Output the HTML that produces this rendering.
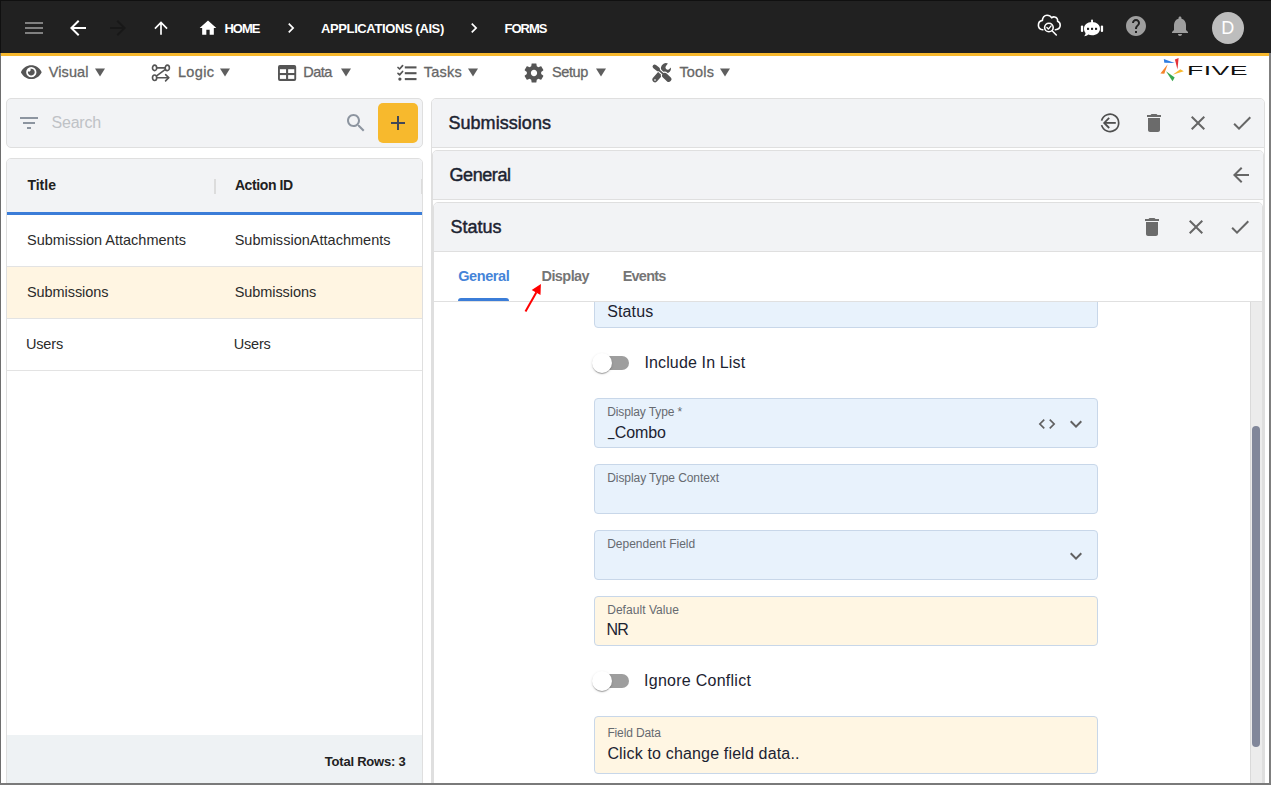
<!DOCTYPE html>
<html lang="en"><head><meta charset="utf-8"><title>Five - Forms</title>
<style>
html,body{margin:0;padding:0;background:#fff;}
body{width:1271px;height:785px;overflow:hidden;font-family:"Liberation Sans",sans-serif;}
#app{position:relative;width:1271px;height:785px;overflow:hidden;background:#fff;}
.a{position:absolute;box-sizing:border-box;}
.t{position:absolute;white-space:nowrap;line-height:1;font-family:"Liberation Sans",sans-serif;}
svg{position:absolute;display:block;overflow:visible;}
.card{position:absolute;box-sizing:border-box;border:1px solid #dfdfdf;border-radius:5px;background:#f2f3f5;}
.fld{position:absolute;box-sizing:border-box;left:594px;width:504px;height:50px;border:1px solid #c8d7e9;border-radius:4px;background:#e8f2fc;}
.fld.c{background:#fff6e3;}

</style></head>
<body>
<div id="app">
<!-- top bar -->
<div class="a" style="left:0;top:0;width:1271px;height:53px;background:#212121;"></div>
<div class="a" style="left:0;top:53px;width:1271px;height:3px;background:#f7b82d;"></div>
<svg style="left:22px;top:16px" width="24" height="24" viewBox="0 0 24 24"><path fill="#808080" d="M3 18h18v-2H3v2zm0-5h18v-2H3v2zm0-7v2h18V6H3z"/></svg>
<svg style="left:66px;top:16px" width="24" height="24" viewBox="0 0 24 24"><path fill="#fff" d="M20 11H7.83l5.59-5.59L12 4l-8 8 8 8 1.41-1.41L7.83 13H20v-2z"/></svg>
<svg style="left:106px;top:16px" width="24" height="24" viewBox="0 0 24 24"><path fill="#181818" d="M12 4l-1.41 1.41L16.17 11H4v2h12.170l-5.58 5.59L12 20l8-8z"/></svg>
<svg style="left:151px;top:18px" width="20" height="20" viewBox="0 0 24 24"><path fill="#fff" d="M4 12l1.41 1.41L11 7.830V20h2V7.830l5.58 5.59L20 12l-8-8-8 8z"/></svg>
<svg style="left:198px;top:18px" width="20" height="20" viewBox="0 0 24 24"><path fill="#fff" d="M10 20v-6h4v6h5v-8h3L12 3 2 12h3v8z"/></svg>
<svg style="left:281px;top:18px" width="20" height="20" viewBox="0 0 24 24"><path fill="#fff" d="M10 6L8.590 7.410 13.170 12l-4.580 4.590L10 18l6-6z"/></svg>
<svg style="left:464px;top:18px" width="20" height="20" viewBox="0 0 24 24"><path fill="#fff" d="M10 6L8.590 7.410 13.170 12l-4.580 4.590L10 18l6-6z"/></svg>
<!-- cloud search -->
<svg style="left:1036px;top:12px" width="26" height="26" viewBox="0 0 26 26" fill="none" stroke="#fff" stroke-width="1.6" stroke-linecap="round" stroke-linejoin="round">
<path d="M6.800 17.800 C3.800 17.400 2.400 15.400 2.400 13.200 C2.400 10.600 4.200 8.800 6.400 8.400 C6.400 5.600 8.400 3.200 11 3.200 C13.200 3.200 14.800 4.200 15.800 5.800 C16.600 5 17.600 4.800 18.600 5 C20.600 5.400 21.800 7 21.600 9.200 C23.400 9.800 24.200 11.400 24.200 13.200 C24.200 15.600 22.400 17.400 19.400 17.800"/>
<circle cx="12.900" cy="15.500" r="4.300"/>
<path d="M16.100 18.800 L20.300 23.000"/>
<path d="M10.900 15.600 L12.400 17.100 L15.100 13.900" stroke-width="1.4"/>
</svg>
<!-- robot chat -->
<svg style="left:1079px;top:17px" width="26" height="22" viewBox="0 0 26 22">
<g fill="#fff">
<rect x="12.100" y="2.400" width="1.900" height="4" rx="0.900"/>
<path d="M13 5 C18 5 21 8 21 11.700 C21 15.500 17.600 18.200 13 18.200 C11.600 18.200 10.300 18 9.200 17.500 C8.200 18.400 6.700 19.200 5.200 19.300 C6.000 18.400 6.500 17.300 6.600 16.000 C5.500 14.900 5 13.400 5 11.700 C5 8 8 5 13 5z"/>
<rect x="1.900" y="8.500" width="2.300" height="6.500" rx="1.100"/>
<rect x="21.800" y="8.500" width="2.300" height="6.500" rx="1.100"/>
</g>
<g fill="#212121"><rect x="8" y="10.800" width="2.100" height="2.100"/><rect x="12" y="10.800" width="2.100" height="2.100"/><rect x="16" y="10.800" width="2.100" height="2.100"/></g>
</svg>
<svg style="left:1124px;top:14px" width="24" height="24" viewBox="0 0 24 24"><path fill="#9e9e9e" d="M12 2C6.480 2 2 6.480 2 12s4.480 10 10 10 10-4.480 10-10S17.520 2 12 2zm1 17h-2v-2h2v2zm2.070-7.750l-.9.920C13.450 12.900 13 13.500 13 15h-2v-.5c0-1.100.450-2.100 1.170-2.830l1.240-1.260c.370-.360.590-.860.590-1.410 0-1.100-.9-2-2-2s-2 .9-2 2H8c0-2.210 1.790-4 4-4s4 1.790 4 4c0 .880-.360 1.680-.930 2.250z"/></svg>
<svg style="left:1168px;top:14px" width="24" height="24" viewBox="0 0 24 24"><path fill="#9e9e9e" d="M12 22c1.100 0 2-.9 2-2h-4c0 1.100.890 2 2 2zm6-6v-5c0-3.070-1.640-5.640-4.500-6.320V4c0-.830-.670-1.500-1.500-1.500s-1.500.670-1.500 1.500v.680C7.630 5.360 6 7.920 6 11v5l-2 2v1h16v-1l-2-2z"/></svg>
<div class="a" style="left:1212px;top:12px;width:32px;height:32px;border-radius:50%;background:#bdbdbd;"></div>
<div class="t" style="left:1221.300px;top:19.100px;font-size:18px;color:#fff;">D</div>

<!-- menu icons -->
<svg style="left:20.700px;top:63.300px" width="20.600" height="18.300" viewBox="0 0 576 512" preserveAspectRatio="none"><path fill="#555" d="M572.520 241.400C518.290 135.590 410.930 64 288 64S57.680 135.640 3.480 241.410a32.350 32.350 0 0 0 0 29.190C57.710 376.410 165.070 448 288 448s230.320-71.640 284.520-177.410a32.350 32.350 0 0 0 0-29.190zM288 400a144 144 0 1 1 144-144 143.930 143.930 0 0 1-144 144zm0-240a95.310 95.310 0 0 0-25.310 3.790 47.850 47.850 0 0 1-66.900 66.900A95.780 95.780 0 1 0 288 160z"/></svg>
<!-- menu dropdown triangles -->
<svg style="left:95.300px;top:67.800px" width="10" height="9.100" viewBox="0 0 10 8"><path fill="#5e5e5e" d="M0 0h10L5 8z"/></svg>
<svg style="left:220.400px;top:67.800px" width="10" height="9.100" viewBox="0 0 10 8"><path fill="#5e5e5e" d="M0 0h10L5 8z"/></svg>
<svg style="left:340.600px;top:67.800px" width="10" height="9.100" viewBox="0 0 10 8"><path fill="#5e5e5e" d="M0 0h10L5 8z"/></svg>
<svg style="left:468.200px;top:67.800px" width="10" height="9.100" viewBox="0 0 10 8"><path fill="#5e5e5e" d="M0 0h10L5 8z"/></svg>
<svg style="left:595.600px;top:67.800px" width="10" height="9.100" viewBox="0 0 10 8"><path fill="#5e5e5e" d="M0 0h10L5 8z"/></svg>
<svg style="left:720.400px;top:67.800px" width="10" height="9.100" viewBox="0 0 10 8"><path fill="#5e5e5e" d="M0 0h10L5 8z"/></svg>
<!-- logic icon -->
<svg style="left:151px;top:64px" width="20" height="18" viewBox="0 0 20 18" fill="none" stroke="#555" stroke-width="1.650" stroke-linecap="round" stroke-linejoin="round">
<ellipse cx="3.600" cy="3.900" rx="2.100" ry="2.750"/><ellipse cx="16.300" cy="3.900" rx="2.100" ry="2.750"/><ellipse cx="3.600" cy="13.700" rx="2.100" ry="2.750"/>
<path d="M5.700 3.900H14.200"/><path d="M14.400 5.400 L5.600 11.800"/><path d="M5.700 13.700H17.500"/><path d="M14.600 10.700 L17.700 13.700 L14.600 16.800"/>
</svg>
<!-- data/table icon -->
<svg style="left:277.900px;top:64.900px" width="18.200" height="16" viewBox="0 0 18.200 16"><rect x="0" y="0" width="18.200" height="16" rx="1.900" fill="#555"/><g fill="#fff"><rect x="1.900" y="4.200" width="6.150" height="3.800"/><rect x="10.150" y="4.200" width="6.150" height="3.800"/><rect x="1.900" y="10.100" width="6.150" height="3.800"/><rect x="10.150" y="10.100" width="6.150" height="3.800"/></g></svg>
<!-- tasks icon -->
<svg style="left:397px;top:64px" width="20" height="18" viewBox="0 0 20 18" fill="none" stroke="#555" stroke-linecap="butt">
<g stroke-width="2.100"><path d="M7.800 3.400H19.500"/><path d="M7.800 9.200H19.500"/><path d="M7.800 15.100H19.500"/></g>
<g stroke-width="1.700" stroke-linejoin="round" stroke-linecap="round"><path d="M1.000 3.500 L2.600 5.000 L5.600 1.600"/><path d="M1.000 9.400 L2.600 10.900 L5.600 7.500"/></g>
<circle cx="2.900" cy="15.100" r="1.650" fill="#555" stroke="none"/>
</svg>
<!-- gear icon -->
<svg style="left:522px;top:61px" width="24" height="24" viewBox="0 0 24 24"><path fill="#555" d="M19.140 12.940c.040-.3.060-.610.060-.940 0-.320-.020-.640-.070-.940l2.030-1.580c.180-.140.230-.410.120-.610l-1.920-3.320c-.120-.220-.370-.290-.590-.220l-2.390.960c-.5-.380-1.030-.7-1.620-.940l-.360-2.540c-.040-.240-.240-.410-.480-.410h-3.840c-.240 0-.430.170-.470.410l-.360 2.540c-.590.240-1.130.570-1.620.940l-2.390-.960c-.220-.080-.470 0-.590.220L2.740 8.870c-.120.210-.080.470.120.610l2.030 1.580c-.050.300-.090.630-.090.940s.020.640.070.940l-2.030 1.580c-.180.140-.230.410-.120.610l1.920 3.320c.120.220.370.290.590.220l2.390-.960c.5.380 1.030.7 1.620.940l.360 2.540c.050.240.240.410.480.410h3.840c.240 0 .440-.170.470-.410l.360-2.540c.590-.240 1.130-.560 1.620-.940l2.390.960c.220.080.470 0 .590-.220l1.920-3.320c.120-.220.070-.470-.120-.610l-2.010-1.580zM12 15.150c-1.740 0-3.150-1.410-3.150-3.150s1.410-3.150 3.150-3.150 3.150 1.410 3.150 3.150-1.410 3.150-3.150 3.150z"/></svg>
<!-- tools icon -->
<svg style="left:646px;top:58px" width="32" height="30" viewBox="0 0 32 30" fill="none" stroke="#555">
<path d="M13.900 16.000 L9.100 21.600" stroke-width="5.400" stroke-linecap="round"/>
<path d="M21.900 5.500 A5.100 5.100 0 1 0 25.000 9.500 L22.700 11.500 Q21.300 12.300 20.100 11.100 Q18.900 9.900 19.800 8.300 Z" fill="#555" stroke="none"/>
<path d="M10.800 10.200 L18 16.800" stroke="#fff" stroke-width="3.800" stroke-linecap="butt"/>
<path d="M18.800 17.500 L22.700 21.200" stroke="#fff" stroke-width="7.600" stroke-linecap="round"/>
<path d="M8.700 8.600 L11.900 11.100" stroke-width="4.200" stroke-linecap="round"/>
<path d="M12 11.300 L18 16.700" stroke-width="1.700"/>
<path d="M18.800 17.500 L22.700 21.200" stroke-width="5.400" stroke-linecap="round"/>
<circle cx="9" cy="22" r="1" fill="#c8c8c8" stroke="none"/>
</svg>
<!-- FIVE logo -->
<svg style="left:1158px;top:56px" width="30" height="28" viewBox="1158 56 30 28">
<path fill="#2f7de1" d="M1163.800 59 L1174.700 62.900 L1164.300 62.700z"/>
<path fill="#e53238" d="M1178.600 57.900 L1174.900 59.600 L1177.500 69.600z"/>
<path fill="#f8b92f" d="M1183.800 71.300 L1180.300 69.200 L1172.700 74.800z"/>
<path fill="#37a84f" d="M1166 71.300 L1174.700 77.400 L1172.500 81.300z"/>
<path fill="#f5832a" d="M1167.700 64.200 L1160.400 73.500 L1164.300 73.700z"/>
</svg>
<div class="t" style="left:1187.300px;top:63.600px;font-size:13px;color:#111;transform-origin:0 0;transform:scaleX(2.05);letter-spacing:0.200px;">FIVE</div>

<!-- LEFT PANEL -->
<div class="card" style="left:6px;top:98px;width:417px;height:50px;"></div>
<svg style="left:17px;top:111px" width="24" height="24" viewBox="0 0 24 24"><path fill="#8d95a0" d="M10 18h4v-2h-4v2zM3 6v2h18V6H3zm3 7h12v-2H6v2z"/></svg>
<svg style="left:344px;top:111px" width="24" height="24" viewBox="0 0 24 24"><path fill="#8d95a0" d="M15.500 14h-.790l-.280-.270C15.410 12.590 16 11.110 16 9.500 16 5.910 13.090 3 9.500 3S3 5.910 3 9.500 5.910 16 9.500 16c1.610 0 3.090-.590 4.230-1.570l.270.280v.790l5 4.990L20.490 19l-4.990-5zm-6 0C7.010 14 5 11.990 5 9.500S7.010 5 9.500 5 14 7.010 14 9.500 11.990 14 9.500 14z"/></svg>
<div class="a" style="left:378px;top:103px;width:40px;height:40px;border-radius:5px;background:#f7b92d;"></div>
<svg style="left:386px;top:111px" width="24" height="24" viewBox="0 0 24 24"><path fill="#414757" d="M19 13h-6v6h-2v-6H5v-2h6V5h2v6h6v2z"/></svg>

<div class="a" style="left:6px;top:158px;width:417px;height:630px;border:1px solid #dfdfdf;border-radius:5px 5px 0 0;background:#fff;overflow:hidden;">
  <div class="a" style="left:0;top:0;width:415px;height:53px;background:#f2f3f5;"></div>
  <div class="a" style="left:0;top:53px;width:415px;height:3px;background:#3b7dd8;"></div>
  <div class="a" style="left:207px;top:20px;width:2px;height:15px;background:#dcdcdc;"></div>
  <div class="a" style="left:414px;top:20px;width:2px;height:15px;background:#dcdcdc;"></div>
  <div class="a" style="left:0;top:107px;width:415px;height:1px;background:#e3e3e3;"></div>
  <div class="a" style="left:0;top:108px;width:415px;height:51px;background:#fff5e2;"></div>
  <div class="a" style="left:0;top:159px;width:415px;height:1px;background:#e3e3e3;"></div>
  <div class="a" style="left:0;top:211px;width:415px;height:1px;background:#e3e3e3;"></div>
  <div class="a" style="left:0;top:576px;width:415px;height:60px;background:#eef2f4;"></div>
</div>

<!-- RIGHT PANEL -->
<div class="card" style="left:431px;top:98px;width:834px;height:700px;background:#fff;overflow:hidden;">
  <div class="a" style="left:0;top:0;width:832px;height:49px;background:#f2f3f5;border-bottom:1px solid #dfdfdf;"></div>
</div>
<div class="card" style="left:432px;top:150px;width:832px;height:700px;background:#fff;overflow:hidden;">
  <div class="a" style="left:0;top:0;width:830px;height:49px;background:#f2f3f5;border-bottom:1px solid #dfdfdf;"></div>
</div>
<div class="card" style="left:433px;top:202px;width:830px;height:700px;background:#fff;overflow:hidden;">
  <div class="a" style="left:0;top:0;width:828px;height:49px;background:#f2f3f5;border-bottom:1px solid #dfdfdf;"></div>
  <div class="a" style="left:0;top:98px;width:828px;height:1px;background:#e0e0e0;"></div>
</div>
<!-- header icons -->
<svg style="left:1098px;top:111px" width="24" height="24" viewBox="0 0 24 24" fill="none" stroke="#4f4f4f" stroke-width="1.700">
<path d="M3.600 9.650 A8.700 8.700 0 1 1 3.600 14.150" stroke-linecap="butt"/>
<path d="M6.600 11.900H17.800" stroke-width="1.800"/><path d="M11.200 6.800 L6.200 11.900 L11.200 17.000" stroke-linejoin="miter" stroke-width="1.800"/>
</svg>
<svg style="left:1142px;top:111px" width="24" height="24" viewBox="0 0 24 24"><path fill="#6b6b6b" d="M6 19c0 1.100.9 2 2 2h8c1.100 0 2-.9 2-2V7H6v12zM19 4h-3.500l-1-1h-5l-1 1H5v2h14V4z"/></svg>
<svg style="left:1186px;top:111px" width="24" height="24" viewBox="0 0 24 24"><path fill="#666" d="M19 6.410L17.590 5 12 10.590 6.410 5 5 6.410 10.590 12 5 17.590 6.410 19 12 13.410 17.590 19 19 17.590 13.410 12z"/></svg>
<svg style="left:1230px;top:111px" width="24" height="24" viewBox="0 0 24 24"><path fill="#666" d="M9 16.170L4.830 12l-1.420 1.410L9 19 21 7l-1.410-1.410z"/></svg>
<svg style="left:1229px;top:163px" width="24" height="24" viewBox="0 0 24 24"><path fill="#666" d="M20 11H7.830l5.590-5.590L12 4l-8 8 8 8 1.410-1.410L7.830 13H20v-2z"/></svg>
<svg style="left:1140px;top:215px" width="24" height="24" viewBox="0 0 24 24"><path fill="#6b6b6b" d="M6 19c0 1.100.9 2 2 2h8c1.100 0 2-.9 2-2V7H6v12zM19 4h-3.500l-1-1h-5l-1 1H5v2h14V4z"/></svg>
<svg style="left:1184px;top:215px" width="24" height="24" viewBox="0 0 24 24"><path fill="#666" d="M19 6.410L17.590 5 12 10.590 6.410 5 5 6.410 10.590 12 5 17.590 6.410 19 12 13.410 17.590 19 19 17.590 13.410 12z"/></svg>
<svg style="left:1228px;top:215px" width="24" height="24" viewBox="0 0 24 24"><path fill="#666" d="M9 16.170L4.830 12l-1.420 1.410L9 19 21 7l-1.410-1.410z"/></svg>
<!-- tab underline -->
<div class="a" style="left:458px;top:298px;width:51px;height:3px;background:#3b7dd8;border-radius:3px 3px 0 0;"></div>

<!-- form scroll area -->
<div class="a" style="left:434px;top:302px;width:816px;height:481px;overflow:hidden;">
  <div class="fld" style="left:160px;top:-24px;"></div>
  <div class="fld" style="left:160px;top:96px;"></div>
  <div class="fld" style="left:160px;top:162px;"></div>
  <div class="fld" style="left:160px;top:228px;"></div>
  <div class="fld c" style="left:160px;top:294px;"></div>
  <div class="fld c" style="left:160px;top:414px;height:58px;"></div>
</div>
<!-- toggles -->
<div class="a" style="left:595px;top:356px;width:34px;height:14px;border-radius:7px;background:#9e9e9e;"></div>
<div class="a" style="left:592px;top:353px;width:20px;height:20px;border-radius:50%;background:#fff;box-shadow:0 2px 1px -1px rgba(0,0,0,.2),0 1px 1px 0 rgba(0,0,0,.14),0 1px 3px 0 rgba(0,0,0,.12);"></div>
<div class="a" style="left:595px;top:674px;width:34px;height:14px;border-radius:7px;background:#9e9e9e;"></div>
<div class="a" style="left:592px;top:671px;width:20px;height:20px;border-radius:50%;background:#fff;box-shadow:0 2px 1px -1px rgba(0,0,0,.2),0 1px 1px 0 rgba(0,0,0,.14),0 1px 3px 0 rgba(0,0,0,.12);"></div>
<!-- field icons -->
<svg style="left:1037px;top:414px" width="20" height="20" viewBox="0 0 24 24"><path fill="#616161" d="M9.400 16.600L4.800 12l4.600-4.600L8 6l-6 6 6 6 1.400-1.400zm5.200 0l4.600-4.600-4.600-4.600L16 6l6 6-6 6-1.400-1.400z"/></svg>
<svg style="left:1064px;top:412px" width="24" height="24" viewBox="0 0 24 24"><path fill="#616161" d="M16.590 8.590L12 13.170 7.410 8.590 6 10l6 6 6-6z"/></svg>
<svg style="left:1064px;top:544px" width="24" height="24" viewBox="0 0 24 24"><path fill="#616161" d="M16.590 8.590L12 13.170 7.410 8.590 6 10l6 6 6-6z"/></svg>
<!-- scrollbar -->
<div class="a" style="left:1250px;top:302px;width:12px;height:481px;background:#ececec;border-left:1px solid #dadada;"></div>
<div class="a" style="left:1252px;top:426px;width:8px;height:321px;border-radius:4px;background:#81879a;"></div>
<!-- red arrow -->
<svg style="left:520px;top:280px" width="30" height="36" viewBox="520 280 30 36"><path d="M525.500 311.400 L536.400 292.200" stroke="#ff0000" stroke-width="2" fill="none"/><path fill="#ff0000" d="M540.900 284 L540.500 294.900 L531.700 290.100z"/></svg>
<!-- window borders -->
<div class="a" style="left:0;top:0;width:1271px;height:1px;background:#101010;"></div>
<div class="a" style="left:0;top:1px;width:1px;height:52px;background:#101010;"></div>
<div class="a" style="left:0;top:53px;width:1px;height:732px;background:#6e6e6e;"></div>
<div class="a" style="left:1269px;top:53px;width:2px;height:732px;background:#7f7f7f;"></div>
<div class="a" style="left:0;top:783px;width:1271px;height:2px;background:#7a7a7a;"></div>

<div class="t" style="left:224.4px;top:22.2px;font-size:13px;font-weight:700;color:#fff;letter-spacing:-0.976px;">HOME</div>
<div class="t" style="left:321.0px;top:22.2px;font-size:13px;font-weight:700;color:#fff;letter-spacing:-0.384px;">APPLICATIONS (AIS)</div>
<div class="t" style="left:504.6px;top:22.2px;font-size:13px;font-weight:700;color:#fff;letter-spacing:-1.018px;">FORMS</div>
<div class="t" style="left:48.7px;top:64.5px;font-size:14.5px;font-weight:400;color:#666666;letter-spacing:0.118px;-webkit-text-stroke:0.3px #666666;">Visual</div>
<div class="t" style="left:177.9px;top:64.5px;font-size:14.5px;font-weight:400;color:#666666;letter-spacing:0.371px;-webkit-text-stroke:0.3px #666666;">Logic</div>
<div class="t" style="left:303.3px;top:64.5px;font-size:14.5px;font-weight:400;color:#666666;letter-spacing:-0.555px;-webkit-text-stroke:0.3px #666666;">Data</div>
<div class="t" style="left:423.8px;top:64.5px;font-size:14.5px;font-weight:400;color:#666666;letter-spacing:0.221px;-webkit-text-stroke:0.3px #666666;">Tasks</div>
<div class="t" style="left:551.9px;top:64.5px;font-size:14.5px;font-weight:400;color:#666666;letter-spacing:-0.357px;-webkit-text-stroke:0.3px #666666;">Setup</div>
<div class="t" style="left:679.4px;top:64.5px;font-size:14.5px;font-weight:400;color:#666666;letter-spacing:0.200px;-webkit-text-stroke:0.3px #666666;">Tools</div>
<div class="t" style="left:51.5px;top:114.6px;font-size:16px;font-weight:400;color:#bfc2c6;letter-spacing:-0.199px;">Search</div>
<div class="t" style="left:27.4px;top:177.8px;font-size:14px;font-weight:700;color:#212121;letter-spacing:0.015px;">Title</div>
<div class="t" style="left:234.9px;top:177.8px;font-size:14px;font-weight:700;color:#212121;letter-spacing:-0.391px;">Action ID</div>
<div class="t" style="left:27.0px;top:232.9px;font-size:14.5px;font-weight:400;color:#2b2b2b;letter-spacing:0.009px;">Submission Attachments</div>
<div class="t" style="left:234.7px;top:232.9px;font-size:14.5px;font-weight:400;color:#2b2b2b;letter-spacing:0.015px;">SubmissionAttachments</div>
<div class="t" style="left:27.0px;top:284.9px;font-size:14.5px;font-weight:400;color:#2b2b2b;letter-spacing:-0.075px;">Submissions</div>
<div class="t" style="left:234.7px;top:284.9px;font-size:14.5px;font-weight:400;color:#2b2b2b;letter-spacing:-0.075px;">Submissions</div>
<div class="t" style="left:26.0px;top:336.9px;font-size:14.5px;font-weight:400;color:#2b2b2b;letter-spacing:-0.179px;">Users</div>
<div class="t" style="left:233.7px;top:336.9px;font-size:14.5px;font-weight:400;color:#2b2b2b;letter-spacing:-0.179px;">Users</div>
<div class="t" style="left:324.8px;top:754.9px;font-size:13px;font-weight:700;color:#212121;letter-spacing:-0.218px;">Total Rows: 3</div>
<div class="t" style="left:448.4px;top:114.0px;font-size:18px;font-weight:400;color:#1c2331;letter-spacing:0.056px;-webkit-text-stroke:0.45px #1c2331;">Submissions</div>
<div class="t" style="left:449.5px;top:166.2px;font-size:18px;font-weight:400;color:#1c2331;letter-spacing:-0.423px;-webkit-text-stroke:0.45px #1c2331;">General</div>
<div class="t" style="left:450.5px;top:218.2px;font-size:18px;font-weight:400;color:#1c2331;letter-spacing:-0.006px;-webkit-text-stroke:0.45px #1c2331;">Status</div>
<div class="t" style="left:458.2px;top:268.9px;font-size:14.5px;font-weight:700;color:#4584d8;letter-spacing:-0.395px;">General</div>
<div class="t" style="left:541.5px;top:268.9px;font-size:14.5px;font-weight:700;color:#757575;letter-spacing:-0.569px;">Display</div>
<div class="t" style="left:622.7px;top:268.9px;font-size:14.5px;font-weight:700;color:#757575;letter-spacing:-0.777px;">Events</div>
<div class="t" style="left:607.2px;top:304.0px;font-size:16px;font-weight:400;color:#1c2331;letter-spacing:0.128px;">Status</div>
<div class="t" style="left:644.4px;top:355.2px;font-size:16px;font-weight:400;color:#1c2331;letter-spacing:0.144px;">Include In List</div>
<div class="t" style="left:607.2px;top:406.0px;font-size:12px;font-weight:400;color:#666a70;letter-spacing:-0.118px;">Display Type *</div>
<div class="t" style="left:608.1px;top:425.1px;font-size:16px;font-weight:400;color:#1c2331;letter-spacing:-0.070px;"><span style="display:inline-block;width:6.6px;letter-spacing:0;transform:scaleX(.72);transform-origin:0 50%;position:relative;top:-1.7px;">_</span>Combo</div>
<div class="t" style="left:607.2px;top:472.0px;font-size:12px;font-weight:400;color:#666a70;letter-spacing:-0.066px;">Display Type Context</div>
<div class="t" style="left:607.2px;top:538.0px;font-size:12px;font-weight:400;color:#666a70;letter-spacing:-0.006px;">Dependent Field</div>
<div class="t" style="left:607.2px;top:603.8px;font-size:12px;font-weight:400;color:#666a70;letter-spacing:0.043px;">Default Value</div>
<div class="t" style="left:606.5px;top:621.9px;font-size:16px;font-weight:400;color:#1c2331;letter-spacing:-0.855px;">NR</div>
<div class="t" style="left:644.1px;top:672.6px;font-size:16px;font-weight:400;color:#1c2331;letter-spacing:0.256px;">Ignore Conflict</div>
<div class="t" style="left:607.4px;top:726.8px;font-size:12px;font-weight:400;color:#666a70;letter-spacing:-0.135px;">Field Data</div>
<div class="t" style="left:607.4px;top:745.6px;font-size:16px;font-weight:400;color:#1c2331;letter-spacing:0.162px;">Click to change field data..</div>
</div>
</body></html>
